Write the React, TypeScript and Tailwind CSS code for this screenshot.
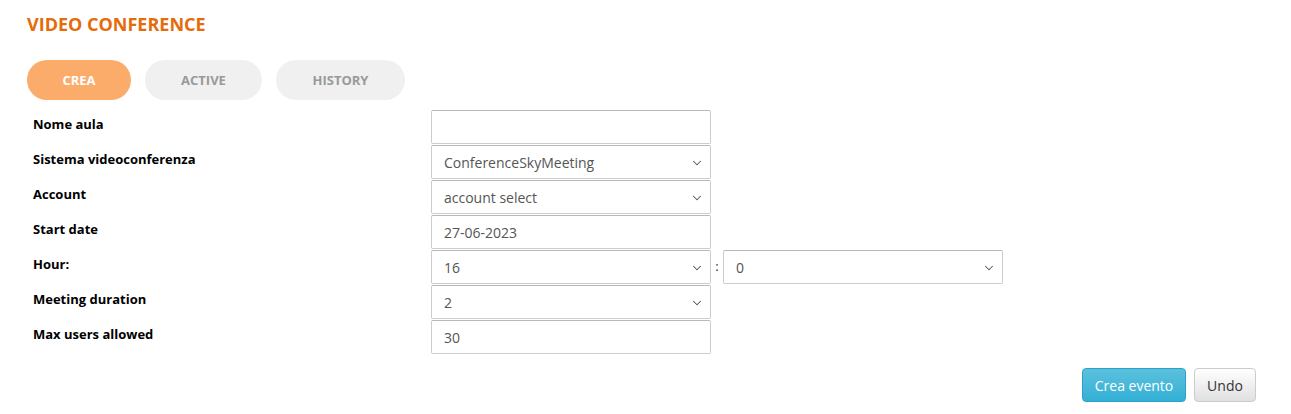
import { ChevronDown } from "lucide-react"

const fields = [
  { label: "Nome aula", kind: "text", value: "" },
  { label: "Sistema videoconferenza", kind: "select", value: "ConferenceSkyMeeting" },
  { label: "Account", kind: "select", value: "account select" },
  { label: "Start date", kind: "text", value: "27-06-2023" },
  { label: "Hour:", kind: "hour", value: "16" },
  { label: "Meeting duration", kind: "select", value: "2" },
  { label: "Max users allowed", kind: "text", value: "30" },
]

const Box = ({ value, select }: { value: string; select?: boolean }) => {
  return (
    <div className="relative w-[280px] h-[34px] border border-[#cccccc] border-t-[#b8b8b8] rounded-[2px] bg-white flex items-center pl-[12px] text-[14px] text-[#555555]">
      <span>{value}</span>
      {select && (
        <ChevronDown size={14} strokeWidth={1.8} className="absolute right-[6px] top-[10px] text-[#555555]" />
      )}
    </div>
  )
}

const App = () => {
  return (
    <div className="w-[1291px] h-[414px] bg-white pl-[27px] pr-[35px] pt-[12px] font-['Open_Sans',sans-serif]">
      <h1 className="text-[18px] leading-[24px] font-bold text-[#e46c0a]">VIDEO CONFERENCE</h1>

      <div className="flex gap-[14px] mt-[24px]">
        <div className="w-[104px] h-[40px] pt-[2px] rounded-full bg-[#fcac6a] text-white text-[13px] font-bold flex items-center justify-center">CREA</div>
        <div className="w-[117px] h-[40px] pt-[2px] rounded-full bg-[#f0f0f0] text-[#999999] text-[13px] font-bold flex items-center justify-center">ACTIVE</div>
        <div className="w-[129px] h-[40px] pt-[2px] rounded-full bg-[#f0f0f0] text-[#999999] text-[13px] font-bold flex items-center justify-center">HISTORY</div>
      </div>

      <div className="mt-[10px] flex flex-col gap-[1px]">
        {fields.map((f) => (
          <div key={f.label} className="flex">
            <div className="w-[404px] pl-[6px] pt-[5px] text-[13px] leading-[18px] font-bold text-black">{f.label}</div>
            {f.kind === "hour" ? (
              <div className="flex items-center">
                <Box value={f.value} select />
                <span className="w-[12px] text-center text-[13px] text-[#333333]">:</span>
                <Box value="0" select />
              </div>
            ) : (
              <Box value={f.value} select={f.kind === "select"} />
            )}
          </div>
        ))}
      </div>

      <div className="flex justify-end gap-[8px] mt-[14px]">
        <button className="w-[104px] h-[34px] rounded-[4px] border border-[#28a4c9] bg-gradient-to-b from-[#5bc0de] to-[#31b0d5] text-white text-[14px]">Crea evento</button>
        <button className="w-[62px] h-[34px] rounded-[4px] border border-[#cccccc] bg-gradient-to-b from-white to-[#e0e0e0] text-[#333333] text-[14px]">Undo</button>
      </div>
    </div>
  )
}

export default App
